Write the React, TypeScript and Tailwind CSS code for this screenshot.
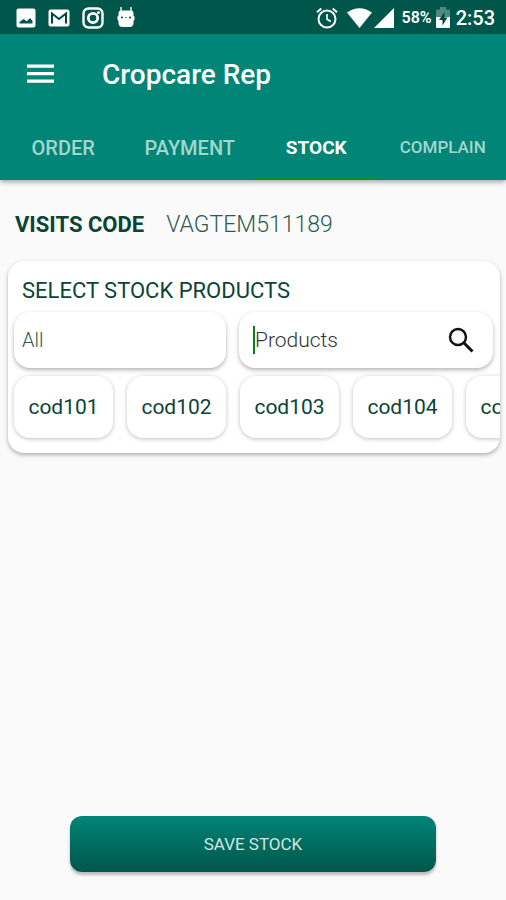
import React, { useState } from 'react';

const tabs = [
  { name: 'ORDER', size: 'text-[20px]' },
  { name: 'PAYMENT', size: 'text-[20px]' },
  { name: 'STOCK', size: 'text-[19px]' },
  { name: 'COMPLAIN', size: 'text-[17px]' }
];

const products = ['cod101', 'cod102', 'cod103', 'cod104', 'cod105'];

const StatusBar: React.FC = () => (
  <div className="flex h-[34px] items-center justify-between bg-[#00564a] pt-px pr-[11px] pl-4 text-white">
    <div className="flex items-center gap-3">
      <svg className="h-5 w-5" viewBox="0 0 20 20" fill="currentColor">
        <path fillRule="evenodd" d="M2.500 0.500h15a2 2 0 0 1 2 2v15a2 2 0 0 1-2 2h-15a2 2 0 0 1-2-2v-15a2 2 0 0 1 2-2ZM3.500 15.500h13v-2.500l-2.500-3-3.200 3.200-3.200-2.200-4.100 3Z" />
      </svg>
      <svg className="h-5 w-[22px]" viewBox="0 0 22 20">
        <rect x="0.500" y="1.500" width="21" height="17" rx="2" fill="currentColor" />
        <path d="M4 15.500V5.500L11 11l7-5.500v10" fill="none" stroke="#00463c" strokeWidth="2" />
      </svg>
      <svg className="h-[22px] w-[22px]" viewBox="0 0 22 22" fill="none" stroke="currentColor" strokeWidth="2.400">
        <rect x="1.500" y="1.500" width="19" height="19" rx="5" />
        <circle cx="11" cy="11" r="4.700" strokeWidth="2.800" />
        <circle cx="16.500" cy="5.500" r="1.500" fill="currentColor" stroke="none" />
      </svg>
      <svg className="h-[22px] w-5" viewBox="0 0 20 22" fill="currentColor">
        <path d="M5 0v5M15 0v5" stroke="currentColor" strokeWidth="1.400" />
        <path d="M5 3.500h10q2.500 0 2.500 3v2q1.200.5 1.200 2.500t-1.200 3v2.500q-.5 3.500-4 3.500h-7q-3.500 0-4-3.500V14Q1.300 13 1.300 11t1.200-2.500v-2q0-3 2.500-3Z" />
        <circle cx="6" cy="10.500" r="1" fill="#00463c" />
        <circle cx="14" cy="10.500" r="1" fill="#00463c" />
        <path d="M9 10.500h2" stroke="#00463c" strokeWidth="0.600" />
      </svg>
    </div>

    <div className="flex items-center">
      <svg className="mr-[9px] h-[22px] w-[22px]" viewBox="0 0 22 22" fill="none" stroke="currentColor" strokeWidth="2">
        <circle cx="11" cy="12" r="8.500" />
        <path d="M1 5.200 5.300 1.500M21 5.200 16.700 1.500" />
        <path d="M11 7v5.300l3.800 2.200" strokeWidth="1.600" />
      </svg>
      <svg className="mr-0.5 h-5 w-[25px]" viewBox="0 0 25 20" fill="currentColor">
        <path d="M0 4.500Q12.500-4 25 4.500L12.500 20Z" />
      </svg>
      <svg className="mr-2 h-5 w-5" viewBox="0 0 20 20" fill="currentColor">
        <path d="M20 0v20H0Z" />
      </svg>
      <span className="mr-1 text-[16px] leading-5 font-semibold">58%</span>
      <svg className="mr-[6px] h-[21px] w-[14px]" viewBox="0 0 14 21" fill="currentColor">
        <path d="M4 0h6v2.500h3a1 1 0 0 1 1 1V10H0V3.500a1 1 0 0 1 1-1h3Z" opacity="0.300" />
        <path d="M0 10h14v10a1 1 0 0 1-1 1H1a1 1 0 0 1-1-1Z" />
        <path d="M8.500 5 3 13h3.500v5.500L11.500 10.500H8.500Z" fill="#00463c" />
      </svg>
      <span className="text-[20px] leading-6 font-medium">2:53</span>
    </div>
  </div>
);

const App: React.FC = () => {
  const [activeTab, setActiveTab] = useState('STOCK');
  const [category, setCategory] = useState('All');
  const [search, setSearch] = useState('');

  return (
    <div className="flex min-h-screen flex-col bg-[#fafafa] font-['Roboto',sans-serif] text-[#0b4436]">
      <header className="bg-[#018577] shadow-[0_2px_5px_rgba(0,0,0,0.35)]">
        <StatusBar />
        <div className="flex h-20 items-center pl-[27px]">
          <button type="button" aria-label="Open menu" className="mr-12 flex h-8 w-[27px] items-center">
            <svg className="h-5 w-[27px]" viewBox="0 0 27 20" fill="white">
              <path d="M0 0.500h27v3.200H0zM0 8h27v3.200H0zM0 15.500h27v3.200H0z" />
            </svg>
          </button>
          <h1 className="pt-0.5 text-[28px] leading-8 font-medium text-white">Cropcare Rep</h1>
        </div>
        <nav className="grid h-[66px] grid-cols-4">
          {tabs.map(tab => (
            <button
              key={tab.name}
              type="button"
              onClick={() => setActiveTab(tab.name)}
              className={`border-b-2 pt-1 ${tab.size} ${
                activeTab === tab.name ? 'border-[#07902f] font-bold text-white' : 'border-transparent font-medium text-[#a5d5cf]'
              }`}
            >
              {tab.name}
            </button>
          ))}
        </nav>
      </header>

      <main className="flex flex-1 flex-col">
        <div className="flex items-baseline gap-[22px] px-[15px] pt-[31px] pb-[22px]">
          <span className="text-[22px] leading-7 font-bold">VISITS CODE</span>
          <span className="text-[23px] leading-7 font-light text-[#2f5a50]">VAGTEM511189</span>
        </div>

        <section className="mr-[6px] ml-2 overflow-hidden rounded-2xl bg-white pt-4 pb-[15px] shadow-[0_2px_4px_rgba(0,0,0,0.3)]">
          <h2 className="pl-[14px] text-[22px] leading-7">SELECT STOCK PRODUCTS</h2>

          <div className="mt-[7px] mr-[7px] ml-[6px] flex gap-[13px]">
            <select
              aria-label="Category"
              value={category}
              onChange={e => setCategory(e.target.value)}
              className="h-14 w-[212px] appearance-none rounded-2xl bg-white pl-2 text-[20px] font-light text-[#2f5a50] shadow-[0_2px_4px_rgba(0,0,0,0.3)] outline-none"
            >
              <option value="All">All</option>
            </select>
            <div className="flex h-14 min-w-0 flex-1 items-center rounded-2xl bg-white pr-[18px] pl-[14px] shadow-[0_2px_4px_rgba(0,0,0,0.3)]">
              <span className="h-7 w-[2px] shrink-0 bg-[#0b7a24]" />
              <input
                type="text"
                aria-label="Products"
                placeholder="Products"
                value={search}
                onChange={e => setSearch(e.target.value)}
                className="min-w-0 flex-1 pt-0.5 text-[21px] font-light outline-none placeholder:text-[#333333]"
              />
              <button type="button" aria-label="Search">
                <svg className="h-7 w-7" viewBox="0 0 28 28" fill="none" stroke="#111111">
                  <circle cx="11" cy="11" r="8" strokeWidth="2.500" />
                  <path d="M16.500 16.500 25.500 25.500" strokeWidth="3" />
                </svg>
              </button>
            </div>
          </div>

          <div className="-mb-[6px] flex gap-[14px] overflow-hidden pt-2 pb-[6px] pl-[6px]">
            {products.map(code => (
              <button
                key={code}
                type="button"
                className="h-[62px] w-[99px] shrink-0 rounded-2xl bg-white pt-0.5 text-[21px] shadow-[0_1px_4px_rgba(0,0,0,0.25)]"
              >
                {code}
              </button>
            ))}
          </div>
        </section>

        <button
          type="button"
          className="mx-[70px] mt-auto mb-7 h-14 rounded-xl bg-linear-to-b from-[#018577] to-[#00564a] pt-0.5 text-[17px] text-[#d5e5e2] shadow-[0_3px_3px_rgba(0,0,0,0.25)]"
        >
          SAVE STOCK
        </button>
      </main>
    </div>
  );
};

export default App;
